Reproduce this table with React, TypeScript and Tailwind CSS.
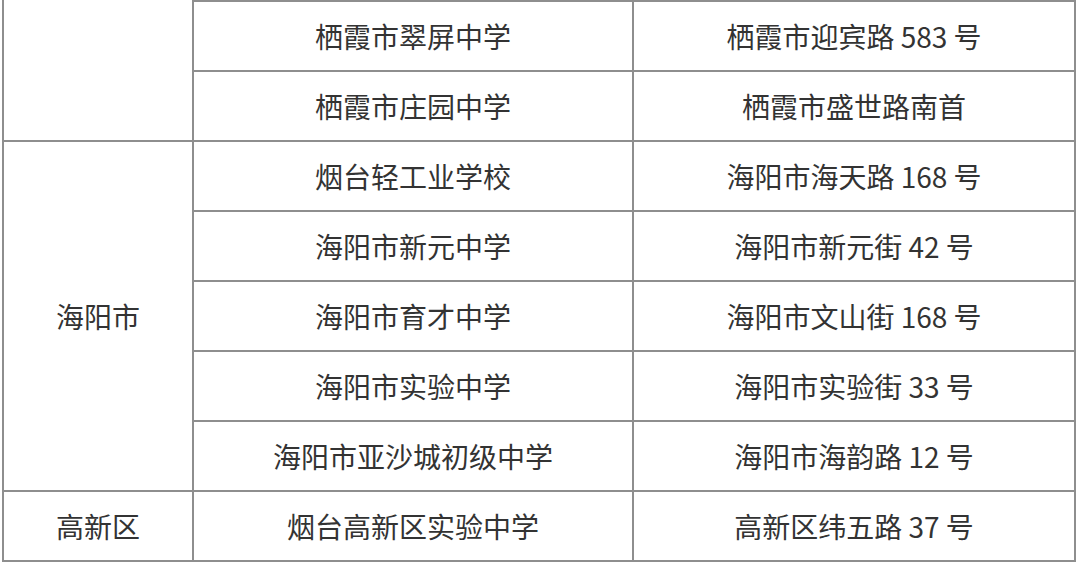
import React from "react";

const font = { fontFamily: '"Noto Sans CJK SC", "Noto Sans", sans-serif' };

const rows: [string, string][] = [
  ["栖霞市翠屏中学", "栖霞市迎宾路 583 号"],
  ["栖霞市庄园中学", "栖霞市盛世路南首"],
  ["烟台轻工业学校", "海阳市海天路 168 号"],
  ["海阳市新元中学", "海阳市新元街 42 号"],
  ["海阳市育才中学", "海阳市文山街 168 号"],
  ["海阳市实验中学", "海阳市实验街 33 号"],
  ["海阳市亚沙城初级中学", "海阳市海韵路 12 号"],
  ["烟台高新区实验中学", "高新区纬五路 37 号"],
];

const cell =
  "flex items-center justify-center border-r-2 border-b-2 border-[#8e8e8e]";

export default function App() {
  return (
    <div
      className="w-[1080px] h-[562px] bg-white overflow-hidden text-[28px] text-[#333]"
      style={font}
    >
      <div className="ml-[2px] w-[1074px] grid grid-cols-[190px_440px_442px] grid-rows-[72px_repeat(7,70px)] border-l-2 border-[#8e8e8e]">
        <div className="row-span-2 border-r-2 border-b-2 border-[#8e8e8e]" />
        <div className={`${cell} border-t-2`}>{rows[0][0]}</div>
        <div className={`${cell} border-t-2`}>{rows[0][1]}</div>
        <div className={cell}>{rows[1][0]}</div>
        <div className={cell}>{rows[1][1]}</div>
        <div className={`${cell} row-span-5`}>海阳市</div>
        {rows.slice(2, 7).map((r, i) => (
          <React.Fragment key={i}>
            <div className={cell}>{r[0]}</div>
            <div className={cell}>{r[1]}</div>
          </React.Fragment>
        ))}
        <div className={cell}>高新区</div>
        <div className={cell}>{rows[7][0]}</div>
        <div className={cell}>{rows[7][1]}</div>
      </div>
    </div>
  );
}
